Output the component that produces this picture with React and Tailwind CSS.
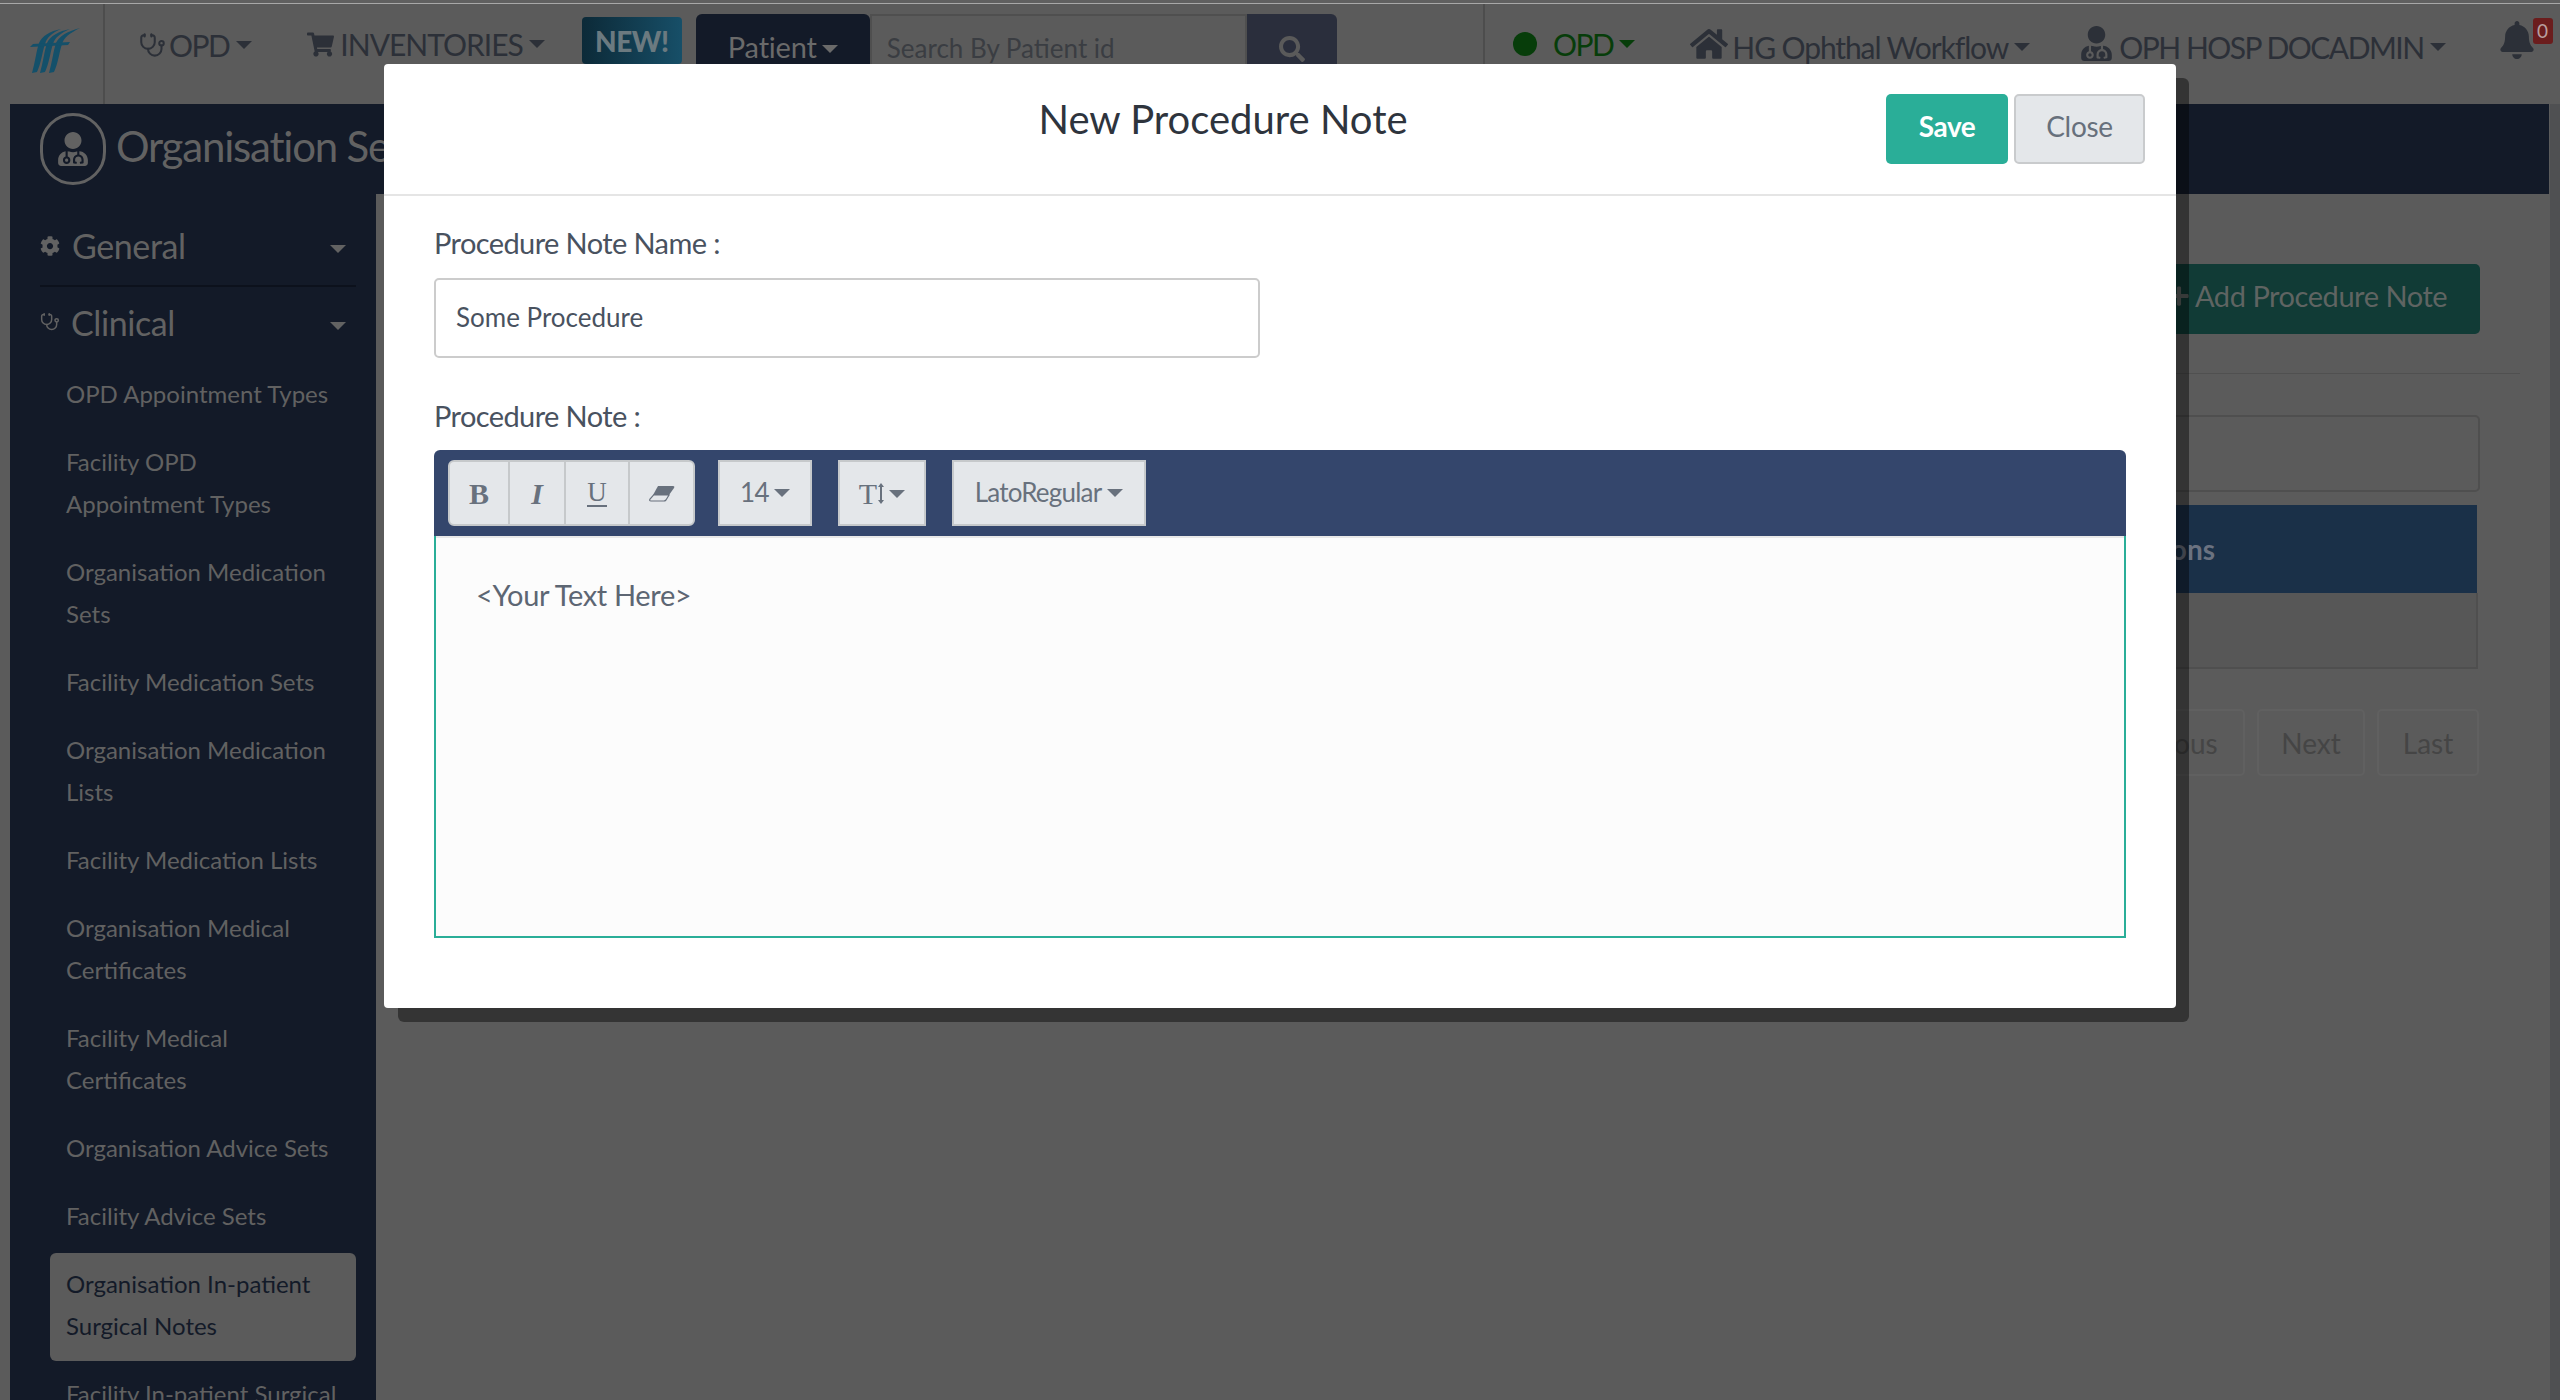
import React from "react";
import { Stethoscope } from "lucide-react";
import { FaShoppingCart, FaHome, FaUserMd, FaBell, FaCog, FaSearch, FaPlus } from "react-icons/fa";

const Caret = ({ className = "" }) => (
  <span className={"inline-block w-0 h-0 border-x-[8px] border-x-transparent border-t-[8px] border-t-current " + className} />
);

const Logo = () => (
  <svg width="50" height="45" viewBox="0 0 50 45" className="shrink-0" fill="#14506a">
    <path d="M2 45 C5 35 6 24 9 15 C12 8 20 3 31 1 C22 5 17 9 15 16 C12 25 11 36 7 44 Z" />
    <path d="M10 45 C13 35 14 24 17 15 C20 8 29 3 40 1 C31 5 25 9 23 16 C20 25 19 36 15 44 Z" />
    <path d="M19 45 C22 35 23 24 26 15 C29 8 38 3 50 0 C40 5 34 9 32 16 C29 25 28 36 24 44 Z" />
    <path d="M0 19 L3 16 L40 14 L38 17 L0 19 Z" />
  </svg>
);

const DoctorCircle = () => (
  <span className="flex items-center justify-center w-[66px] h-[72px] rounded-full border-[3px] border-[#626262] text-[#626262] shrink-0">
    <FaUserMd size={34} />
  </span>
);

const Eraser = () => (
  <svg width="26" height="17" viewBox="0 0 26 17" fill="#68717d">
    <path d="M9 1 H24 Q26 1 25 3 L20 10 H4 Z" />
    <path d="M4.5 10 H20 L17 15 Q16 16 15 16 H2 Q0 16 1 14 Z" fill="none" stroke="#68717d" strokeWidth="1.2" />
  </svg>
);

const SizeArrow = () => (
  <svg width="6" height="21" viewBox="0 0 6 21" fill="#68717d" className="ml-[1px] mr-[5px]">
    <path d="M3 0 L6 4 H4 V17 H6 L3 21 L0 17 H2 V4 H0 Z" />
  </svg>
);

const items = [
  ["OPD Appointment Types"],
  ["Facility OPD", "Appointment Types"],
  ["Organisation Medication", "Sets"],
  ["Facility Medication Sets"],
  ["Organisation Medication", "Lists"],
  ["Facility Medication Lists"],
  ["Organisation Medical", "Certificates"],
  ["Facility Medical", "Certificates"],
  ["Organisation Advice Sets"],
  ["Facility Advice Sets"],
  ["Organisation In-patient", "Surgical Notes"],
  ["Facility In-patient Surgical"],
];

const SideItem = ({ lines, active }) => (
  <div className={"ml-[40px] mr-[20px] mb-[2px] pl-[16px] pr-2 pt-[10px] pb-[14px] rounded-[6px] text-[24px] leading-[42px] " + (active ? "bg-[#5b5b5b] text-[#131a28]" : "text-[#616161]")}>
    {lines.map((l) => (
      <div key={l} className="whitespace-nowrap">{l}</div>
    ))}
  </div>
);

const ToolBtn = ({ className = "", children }) => (
  <div className={"flex items-center justify-center h-[66px] bg-[#e4e7ea] border-2 border-[#c6c9cb] text-[#68717d] " + className}>
    {children}
  </div>
);

export default function App() {
  return (
    <div className="relative w-[2560px] h-[1400px] overflow-hidden bg-[#5b5b5b] font-['Lato',sans-serif]">
      <div className="h-[3px] bg-[#606060]" />
      <div className="h-[1px] bg-[#a8a8a8]" />
      {/* navbar */}
      <div className="flex h-[100px] text-[#2c3038]">
        <div className="flex w-[105px] pl-[30px] pt-[24px] border-r-2 border-[#4d4d4d] shrink-0">
          <Logo />
        </div>
        <div className="flex items-start w-[1380px] shrink-0 border-r-2 border-[#4d4d4d]">
          <div className="flex items-center ml-[34px] mt-[24px] h-[34px] text-[30px] tracking-[-1.5px]">
            <Stethoscope size={27} strokeWidth={1.8} className="mr-[3px]" />
            OPD
            <Caret className="ml-[7px]" />
          </div>
          <div className="flex items-center ml-[55px] mt-[23px] h-[34px] text-[30px] tracking-[-1px]">
            <FaShoppingCart size={27} className="mr-[6px]" />
            INVENTORIES
            <Caret className="ml-[6px]" />
          </div>
          <div className="flex items-center justify-center ml-[37px] mt-[13px] w-[100px] h-[47px] rounded-[4px] bg-gradient-to-r from-[#0c2a38] to-[#174f68] text-[#6b7a80] font-black text-[28px] tracking-[-0.5px]">
            NEW!
          </div>
          <div className="flex ml-[14px] mt-[10px] h-[60px]">
            <div className="flex items-center justify-center w-[174px] pt-[6px] rounded-t-[6px] bg-[#131a28] text-[#6a6a6a] text-[29px] tracking-[-0.2px]">
              Patient
              <Caret className="ml-[5px] mt-[3px]" />
            </div>
            <div className="flex items-center w-[377px] pl-[15px] pt-[6px] bg-[#5b5b5b] border-2 border-b-0 border-[#4f4f4f] text-[#3a3d42] text-[26px]">
              Search By Patient id
            </div>
            <div className="flex items-center justify-center w-[90px] pt-[10px] rounded-tr-[6px] bg-[#2a2e3c] text-[#5a5a5a]">
              <FaSearch size={26} />
            </div>
          </div>
        </div>
        <div className="flex items-start flex-1">
          <span className="ml-[28px] mt-[28px] w-[24px] h-[24px] rounded-full bg-[#073d0a]" />
          <div className="flex items-center ml-[16px] mt-[22px] h-[36px] text-[30px] tracking-[-1.5px] text-[#073d0a]">
            OPD
            <Caret className="ml-[6px]" />
          </div>
          <FaHome size={38} className="ml-[55px] mt-[21px]" />
          <div className="flex items-center ml-[4px] mt-[25px] h-[36px] text-[30px] tracking-[-1.1px] whitespace-nowrap">
            HG Ophthal Workflow
            <Caret className="ml-[6px]" />
          </div>
          <FaUserMd size={35} className="ml-[49px] mt-[22px]" />
          <div className="flex items-center ml-[5px] mt-[25px] h-[36px] text-[30px] tracking-[-1.5px] whitespace-nowrap">
            OPH HOSP DOCADMIN
            <Caret className="ml-[6px]" />
          </div>
          <div className="relative ml-[52px] mt-[17px]">
            <FaBell size={38} />
            <span className="absolute left-[35px] -top-[3px] flex items-center justify-center w-[20px] h-[26px] rounded-[3px] bg-[#6b1d1d] text-[#b8a0a0] text-[19px]">0</span>
          </div>
        </div>
      </div>
      {/* body */}
      <div className="ml-[10px] mr-[11px]">
        <div className="flex items-center h-[90px] pl-[30px] bg-[#131a28] text-[#626262]">
          <DoctorCircle />
          <span className="ml-[10px] -mt-[6px] text-[42px] tracking-[-1.2px] whitespace-nowrap">Organisation Setup</span>
        </div>
        <div className="flex">
          <div className="w-[366px] shrink-0 bg-[#131a28] h-[1206px] overflow-hidden">
            <div className="flex items-center ml-[30px] mr-[20px] h-[93px] pt-[12px] text-[#626262] border-b-2 border-[#0c111c]">
              <FaCog size={20} />
              <span className="ml-[12px] text-[34px] tracking-[-0.4px]">General</span>
              <Caret className="ml-auto mr-[10px] mt-[6px]" />
            </div>
            <div className="flex items-center ml-[30px] mr-[20px] h-[72px] pb-[2px] text-[#626262]">
              <Stethoscope size={20} strokeWidth={1.8} />
              <span className="ml-[11px] text-[34px] tracking-[-0.4px]">Clinical</span>
              <Caret className="ml-auto mr-[10px] mt-[8px]" />
            </div>
            <div className="pt-[4px]">
              {items.map((l, i) => (
                <SideItem key={l[0]} lines={l} active={i === 10} />
              ))}
            </div>
          </div>
          <div className="flex-1 pt-[70px] pr-[69px] pl-[20px]">
            <div className="flex justify-end">
              <div className="flex items-center w-[342px] h-[70px] pl-[30px] pb-[7px] rounded-[5px] bg-[#113b36] text-[#5f6462] text-[29px] tracking-[-0.45px]">
                <FaPlus size={22} className="mr-[5px]" />
                Add Procedure Note
              </div>
            </div>
            <div className="mt-[39px] mr-[-40px] h-[1px] bg-[#505050]" />
            <div className="mt-[41px] h-[77px] rounded-[5px] border-2 border-[#4f4f4f]" />
            <div className="mt-[13px] mr-[3px] flex items-center justify-end h-[88px] pr-[262px] bg-[#1a3048] text-[#6b7280] font-bold text-[28px]">
              Actions
            </div>
            <div className="mr-[2px] h-[76px] border-2 border-t-0 border-[#4f4f4f] bg-[#575757]" />
            <div className="mt-[40px] mr-[1px] flex justify-end gap-[12px] text-[#454545] text-[28px]">
              <div className="flex items-center justify-center w-[160px] h-[67px] rounded-[5px] border-2 border-[#606060]">Previous</div>
              <div className="flex items-center justify-center w-[108px] h-[67px] rounded-[5px] border-2 border-[#606060]">Next</div>
              <div className="flex items-center justify-center w-[102px] h-[67px] rounded-[5px] border-2 border-[#606060]">Last</div>
            </div>
          </div>
        </div>
      </div>
      <div className="absolute right-0 top-[104px] bottom-0 w-[10px] bg-[#4f5052]" />
      {/* modal shadow */}
      <div className="absolute left-[398px] top-[78px] w-[1791px] h-[944px] rounded-[6px] bg-black/[0.42]" />
      {/* modal */}
      <div className="absolute left-[384px] top-[64px] w-[1792px] h-[944px] rounded-[4px] bg-white text-[#49525f]">
        <div className="relative flex justify-center h-[132px] pr-[114px] border-b-2 border-[#e5e5e5]">
          <h2 className="mt-[25px] text-[40px] leading-[60px] text-[#2e343d]">New Procedure Note</h2>
          <div className="absolute right-[31px] top-[30px] flex gap-[6px]">
            <div className="flex items-center justify-center w-[122px] h-[70px] pb-[7px] rounded-[5px] bg-[#2aae98] text-white font-bold text-[28px] tracking-[-0.5px]">Save</div>
            <div className="flex items-center justify-center w-[131px] h-[70px] pb-[7px] rounded-[5px] bg-[#e4e7ea] border-2 border-[#c9cbcd] text-[#67707c] text-[28px] tracking-[-0.3px]">Close</div>
          </div>
        </div>
        <div className="px-[50px]">
          <div className="mt-[29px] text-[29px] leading-[36px] tracking-[-0.6px]">Procedure Note Name :</div>
          <div className="flex items-center mt-[17px] w-[826px] h-[80px] pl-[20px] pb-[2px] rounded-[5px] border-2 border-[#cccccc] text-[26px] text-[#49525f]">Some Procedure</div>
          <div className="mt-[40px] text-[29px] leading-[36px] tracking-[-0.6px]">Procedure Note :</div>
          <div className="mt-[16px] flex items-center h-[86px] w-[1692px] pl-[14px] rounded-t-[6px] bg-[#34466c]">
            <div className="flex">
              <ToolBtn className="w-[62px] rounded-l-[6px] font-['Liberation_Serif',serif] font-bold text-[30px]">B</ToolBtn>
              <ToolBtn className="w-[58px] -ml-[2px] font-['Liberation_Serif',serif] font-bold italic text-[30px]">I</ToolBtn>
              <ToolBtn className="w-[66px] -ml-[2px] font-['Liberation_Serif',serif]">
                <span className="text-[27px] leading-[25px] border-b-2 border-[#68717d]">U</span>
              </ToolBtn>
              <ToolBtn className="w-[67px] -ml-[2px] rounded-r-[6px]"><Eraser /></ToolBtn>
            </div>
            <ToolBtn className="ml-[23px] w-[94px] pb-[2px] text-[26px] tracking-[-0.5px]">14<Caret className="ml-[5px] mt-[2px]" /></ToolBtn>
            <ToolBtn className="ml-[26px] w-[88px] text-[30px]">
              <span className="font-['Liberation_Serif',serif]">T</span>
              <SizeArrow />
              <Caret className="mt-[2px]" />
            </ToolBtn>
            <ToolBtn className="ml-[26px] w-[194px] pb-[2px] text-[26px] tracking-[-0.8px]">LatoRegular<Caret className="ml-[6px] mt-[2px]" /></ToolBtn>
          </div>
          <div className="w-[1692px] h-[402px] pl-[40px] pt-[41px] bg-[#fcfcfc] border-2 border-t-0 border-[#2aae98] text-[29px] leading-[36px] text-[#5d6673] tracking-[-0.35px] shadow-[inset_0_2px_0_#e8e8e8]">
            {"<Your Text Here>"}
          </div>
        </div>
      </div>
    </div>
  );
}
